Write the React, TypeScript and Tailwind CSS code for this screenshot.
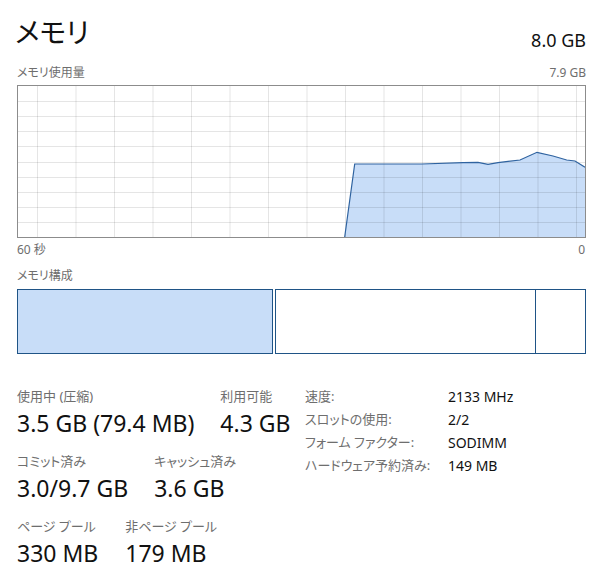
import React from "react";

const FONT = "'Noto Sans', 'Noto Sans CJK JP', sans-serif";

const pts: [number, number][] = [
  [326.7, 151],
  [336.7, 78],
  [403.7, 78],
  [445, 76.7],
  [460, 76.3],
  [470, 78.3],
  [480, 76.7],
  [502, 74],
  [519, 66.3],
  [535, 70],
  [548.7, 74],
  [557, 75],
  [567, 81.3],
];

function Chart() {
  const W = 567;
  const H = 151;
  const vx: number[] = [];
  for (let k = 0; k < 15; k++) vx.push(19.5 + 38.5 * k);
  const hy: number[] = [];
  for (let k = 1; k < 10; k++) hy.push(Math.round(H - 15.1 * k) + 0.5);
  const line = pts.map((p) => p.join(",")).join(" ");
  const area = `${line} 567,151`;
  return (
    <svg width={W} height={H} viewBox={`0 0 ${W} ${H}`} className="block">
      <polygon points={area} fill="#c8ddf8" />
      {vx.map((x) => (
        <line key={"v" + x} x1={x} x2={x} y1={0} y2={H} stroke="rgba(0,0,0,0.1)" strokeWidth={1} />
      ))}
      {hy.map((y) => (
        <line key={"h" + y} x1={0} x2={W} y1={y} y2={y} stroke="rgba(0,0,0,0.1)" strokeWidth={1} />
      ))}
      <polyline points={line} fill="none" stroke="#2f63a0" strokeWidth={1.2} />
    </svg>
  );
}

function Stat({ label, value }: { label: string; value: string }) {
  return (
    <div className="flex flex-col">
      <div className="h-[18px] text-[13px] leading-[18px] text-[#6e6e6e] whitespace-nowrap [font-feature-settings:'palt']">
        {label}
      </div>
      <div className="mt-[3px] text-[23px] leading-[30px] text-[#111] whitespace-nowrap">{value}</div>
    </div>
  );
}

const props: [string, string][] = [
  ["速度:", "2133 MHz"],
  ["スロットの使用:", "2/2"],
  ["フォーム ファクター:", "SODIMM"],
  ["ハードウェア予約済み:", "149 MB"],
];

export default function App() {
  return (
    <div className="w-[609px] h-[587px] bg-white overflow-hidden" style={{ fontFamily: FONT }}>
      <div className="pl-[17px] w-[586px]">
        {/* title row */}
        <div className="flex justify-between items-start pt-[18px]">
          <div className="h-[28px] text-[28px] leading-[28px] text-[#111] -ml-[2px] [font-feature-settings:'palt']">
            メモリ
          </div>
          <div className="mt-[12.7px] text-[18px] leading-[18px] text-[#111]">8.0 GB</div>
        </div>
        {/* usage label row */}
        <div className="mt-[16px] flex justify-between items-baseline h-[16px]">
          <div className="text-[12px] leading-[16px] text-[#6e6e6e] [font-feature-settings:'palt']">メモリ使用量</div>
          <div className="text-[12px] leading-[16px] text-[#6e6e6e]">7.9 GB</div>
        </div>
        {/* graph */}
        <div className="mt-[4px] h-[153px] w-[569px] border border-[#8c8c8c]">
          <Chart />
        </div>
        <div className="mt-[4px] flex justify-between h-[16px]">
          <div className="text-[12px] leading-[16px] text-[#6e6e6e]">60 秒</div>
          <div className="text-[12px] leading-[16px] text-[#6e6e6e] pr-[1px]">0</div>
        </div>
        <div className="mt-[10px] h-[16px] text-[12px] leading-[16px] text-[#6e6e6e] [font-feature-settings:'palt']">
          メモリ構成
        </div>
        {/* composition bar */}
        <div className="mt-[5px] flex h-[65px] w-[569px]">
          <div className="w-[256px] h-full border border-[#1f5486] bg-[#c8ddf8]" />
          <div className="w-[2px]" />
          <div className="w-[261px] h-full border border-[#1f5486]" />
          <div className="w-[50px] h-full border-y border-r border-[#1f5486]" />
        </div>
        {/* stats */}
        <div className="mt-[31px] flex">
          <div className="w-[288px] flex flex-col gap-[14px] pt-[2px]">
            <div className="flex gap-[26px]">
              <Stat label="使用中 (圧縮)" value="3.5 GB (79.4 MB)" />
              <Stat label="利用可能" value="4.3 GB" />
            </div>
            <div className="flex gap-[26px]">
              <Stat label="コミット済み" value="3.0/9.7 GB" />
              <Stat label="キャッシュ済み" value="3.6 GB" />
            </div>
            <div className="flex gap-[27px]">
              <Stat label="ページ プール" value="330 MB" />
              <Stat label="非ページ プール" value="179 MB" />
            </div>
          </div>
          <div className="flex flex-col">
            {props.map(([k, v]) => (
              <div key={k} className="flex h-[23px] items-center">
                <div className="w-[143px] text-[13px] leading-[23px] text-[#6e6e6e] whitespace-nowrap [font-feature-settings:'palt']">
                  {k}
                </div>
                <div className="text-[14px] leading-[23px] text-[#111] whitespace-nowrap">{v}</div>
              </div>
            ))}
          </div>
        </div>
      </div>
    </div>
  );
}
